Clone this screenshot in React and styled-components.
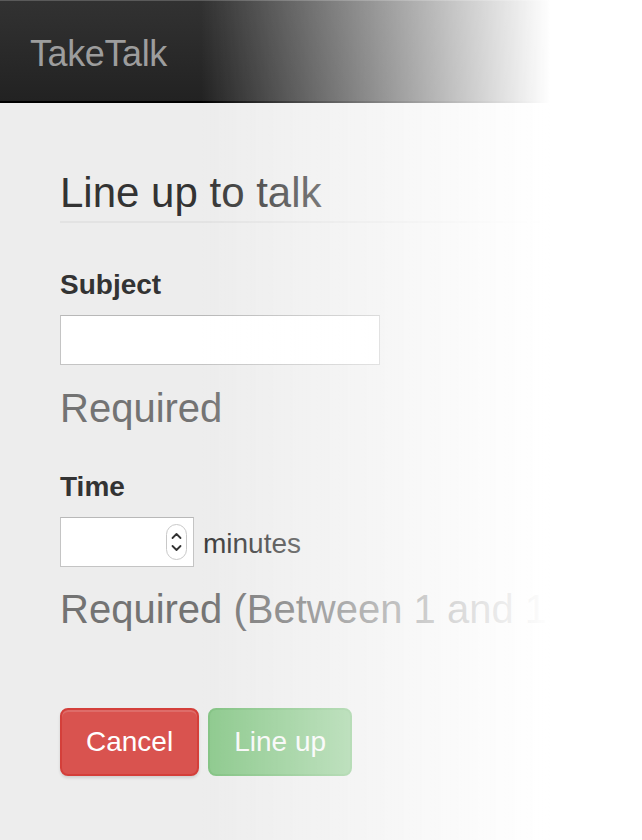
import styled, { createGlobalStyle } from "styled-components";

const GlobalStyle = createGlobalStyle`
  html, body {
    margin: 0;
    padding: 0;
    background: #ededed;
    font-family: "Liberation Sans", Arial, Helvetica, sans-serif;
    color: #333;
  }
`;

const Page = styled.div`
  min-height: 840px;
  background: #ededed;
`;

const Navbar = styled.header`
  box-sizing: border-box;
  height: 103px;
  padding: 33px 0 0 30px;
  background: linear-gradient(to bottom, #323232 0%, #222 100%);
  border-top: 1px solid #5a5a5a;
  border-bottom: 2px solid #000;
`;

const Brand = styled.div`
  font-size: 36px;
  line-height: 40px;
  color: #9d9d9d;
  letter-spacing: -0.4px;
`;

const Content = styled.main`
  padding: 62px 0 0 60px;
`;

const Legend = styled.h1`
  margin: 0;
  font-size: 42px;
  font-weight: 400;
  line-height: 56px;
  color: #333;
  border-bottom: 2px solid #e3e3e3;
`;

const Label = styled.label`
  display: block;
  margin-top: ${(p) => p.$top}px;
  margin-bottom: 10px;
  font-size: 28px;
  font-weight: 700;
  line-height: 40px;
  color: #333;
`;

const TextInput = styled.input`
  display: block;
  box-sizing: border-box;
  width: 320px;
  height: 50px;
  margin: 0;
  padding: 0 8px;
  background: #fff;
  border: 1px solid #c4c4c4;
  border-top-color: #b8b8b8;
  font-family: inherit;
  font-size: 24px;
  outline: none;
`;

const Help = styled.div`
  margin-top: ${(p) => p.$top}px;
  font-size: 40px;
  line-height: 57px;
  color: #737373;
  white-space: nowrap;
`;

const Row = styled.div`
  display: flex;
  align-items: center;
  gap: 9px;
  height: 50px;
`;

const NumberBox = styled.div`
  box-sizing: border-box;
  display: flex;
  align-items: center;
  width: 134px;
  height: 50px;
  padding-right: 6px;
  background: #fff;
  border: 1px solid #c4c4c4;
  border-top-color: #b8b8b8;
`;

const NumberInput = styled.input`
  flex: 1;
  min-width: 0;
  height: 100%;
  border: 0;
  padding: 0 8px;
  background: transparent;
  font-family: inherit;
  font-size: 24px;
  outline: none;
  -moz-appearance: textfield;
  &::-webkit-inner-spin-button,
  &::-webkit-outer-spin-button {
    -webkit-appearance: none;
    margin: 0;
  }
`;

const Unit = styled.span`
  font-size: 28px;
  line-height: 40px;
  color: #3a3a3a;
  margin-top: 4px;
`;

const Actions = styled.div`
  display: flex;
  gap: 9px;
  margin-top: 70px;
`;

const Button = styled.button`
  box-sizing: border-box;
  padding: 12px 24px;
  font-family: inherit;
  font-size: 28px;
  line-height: 40px;
  color: #fff;
  border-radius: 8px;
  border: 2px solid ${(p) => (p.$variant === "danger" ? "#d43f3a" : "#4cae4c")};
  background: ${(p) => (p.$variant === "danger" ? "#d9534f" : "#5cb85c")};
  box-shadow: inset 0 2px 0 rgba(255, 255, 255, 0.15), 0 2px 3px rgba(0, 0, 0, 0.12);
  cursor: pointer;
  &:disabled {
    opacity: 0.65;
    box-shadow: none;
    cursor: not-allowed;
  }
`;

// white fade over the right side of the page
const Fade = styled.div`
  position: fixed;
  inset: 0;
  pointer-events: none;
  background: linear-gradient(
    to right,
    rgba(255, 255, 255, 0) 200px,
    rgba(255, 255, 255, 1) 550px
  );
`;

const Spinner = () => (
  <svg width="21" height="36" viewBox="0 0 21 36">
    <rect x="0.5" y="0.5" width="20" height="35" rx="10" fill="#fff" stroke="#c8c8c8" />
    <path d="M6.5 14 L10.5 10 L14.5 14" fill="none" stroke="#333" strokeWidth="1.8" strokeLinecap="round" strokeLinejoin="round" />
    <path d="M6.5 22 L10.5 26 L14.5 22" fill="none" stroke="#333" strokeWidth="1.8" strokeLinecap="round" strokeLinejoin="round" />
  </svg>
);

const App = () => {
  return (
    <Page>
      <GlobalStyle />
      <Navbar>
        <Brand>TakeTalk</Brand>
      </Navbar>
      <Content>
        <Legend>Line up to talk</Legend>

        <Label htmlFor="subject" $top={42}>Subject</Label>
        <TextInput id="subject" type="text" />
        <Help $top={15}>Required</Help>

        <Label htmlFor="time" $top={30}>Time</Label>
        <Row>
          <NumberBox>
            <NumberInput id="time" type="number" />
            <Spinner />
          </NumberBox>
          <Unit>minutes</Unit>
        </Row>
        <Help $top={14}>Required (Between 1 and 10)</Help>

        <Actions>
          <Button $variant="danger">Cancel</Button>
          <Button $variant="success" disabled>
            Line up
          </Button>
        </Actions>
      </Content>
      <Fade />
    </Page>
  );
};

export default App;
